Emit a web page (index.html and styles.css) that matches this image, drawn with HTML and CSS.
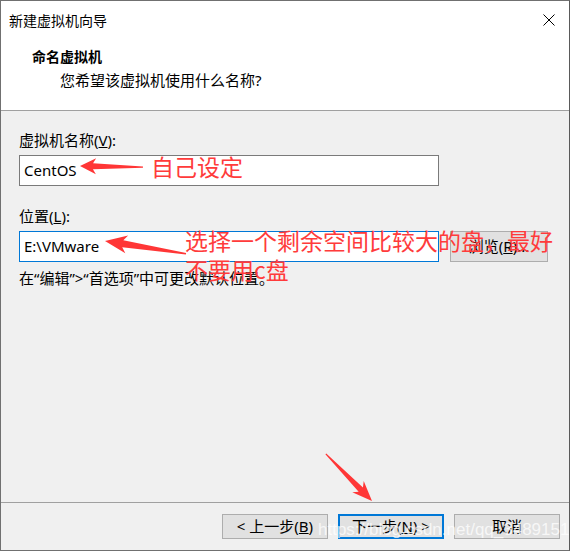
FILE: index.html
```html
<!DOCTYPE html>
<html lang="zh-CN">
<head>
<meta charset="utf-8">
<title>新建虚拟机向导</title>
<link rel="stylesheet" href="styles.css">
</head>
<body>
<div class="window">
  <div class="header">
    <div class="titlebar">
      <span class="title">新建虚拟机向导</span>
      <svg class="close" width="12" height="12" viewBox="0 0 12 12"><path d="M0.5 0.5 L11.5 11.5 M11.5 0.5 L0.5 11.5" stroke="#000" stroke-width="1" fill="none"/></svg>
    </div>
    <div class="heading">命名虚拟机</div>
    <div class="subtitle">您希望该虚拟机使用什么名称?</div>
  </div>
  <div class="content">
    <div class="label">虚拟机名称(<u>V</u>):</div>
    <div class="field">CentOS</div>
    <div class="label label2">位置(<u>L</u>):</div>
    <div class="row">
      <div class="field focused">E:\VMware</div>
      <div class="browse">浏览(<u>R</u>)...</div>
    </div>
    <div class="hint">在“编辑”&gt;“首选项”中可更改默认位置。</div>
  </div>
  <div class="footer">
    <div class="btn">&lt; 上一步(<u>B</u>)</div>
    <div class="btn default">下一步(<u>N</u>) &gt;</div>
    <div class="btn">取消</div>
  </div>

  <svg class="arrows" width="570" height="551" viewBox="0 0 570 551">
    <g fill="#ff3636">
      <polygon transform="translate(80,166) rotate(1)" points="0,0 16,-8 13,-3 63,-0.6 63,0.6 13,3 16,8"/>
      <polygon transform="translate(105,241) rotate(9)" points="0,0 22,-9 18,-3.5 82,-0.8 82,0.8 18,3.5 22,9"/>
      <polygon transform="translate(372,501) rotate(-134.4)" points="0,0 20,-8 16,-3 66,-0.6 66,0.6 16,3 20,8"/>
    </g>
  </svg>
  <div class="note note1">自己设定</div>
  <div class="note note2">选择一个剩余空间比较大的盘，最好<br>不要用c盘</div>
  <div class="watermark">https://blog.csdn.net/qq_34891511</div>
</div>
</body>
</html>
```

FILE: styles.css
```css
html, body {
  margin: 0;
  padding: 0;
  background: #f0f0f0;
}

.window {
  position: relative;
  width: 570px;
  height: 551px;
  box-sizing: border-box;
  border: 1px solid #707070;
  border-right-color: #5a5a5a;
  background: #f0f0f0;
  display: flex;
  flex-direction: column;
  font-family: "Noto Sans", "Noto Sans CJK SC", sans-serif;
  color: #000;
  overflow: hidden;
}

.header {
  height: 110px;
  flex: none;
  box-sizing: border-box;
  background: #fff;
  border-bottom: 1px solid #a0a0a0;
  padding-top: 9px;
}

.titlebar {
  display: flex;
  align-items: center;
  justify-content: space-between;
  height: 20px;
  padding-left: 8px;
  padding-right: 14px;
}

.title {
  font-size: 14px;
  line-height: 20px;
  font-family: "Noto Sans CJK SC", sans-serif;
}

.close {
  display: block;
}

.heading {
  margin-top: 16px;
  margin-left: 31px;
  font-size: 14px;
  line-height: 20px;
  font-weight: bold;
  font-family: "Noto Sans CJK SC", sans-serif;
}

.subtitle {
  margin-top: 4px;
  margin-left: 59px;
  font-size: 15px;
  line-height: 20px;
}

.content {
  flex: 1;
  padding: 19px 18px 0 18px;
}

.label {
  font-size: 15px;
  line-height: 20px;
}

.label2 {
  margin-top: 20px;
}

.field {
  margin-top: 5px;
  width: 420px;
  height: 31px;
  box-sizing: border-box;
  border: 1px solid #7a7a7a;
  background: #fff;
  padding-left: 4px;
  font-size: 15px;
  line-height: 29px;
}

.field.focused {
  border-color: #0078d7;
}

.row {
  display: flex;
  align-items: flex-end;
}

.browse {
  margin-left: 11px;
  width: 98px;
  height: 31px;
  box-sizing: border-box;
  border: 1px solid #adadad;
  background: #e1e1e1;
  font-size: 15px;
  line-height: 29px;
  text-align: center;
}

.hint {
  margin-top: 6px;
  font-size: 15px;
  line-height: 20px;
}

.footer {
  flex: none;
  height: 48px;
  box-sizing: border-box;
  border-top: 1px solid #a0a0a0;
  padding-top: 11px;
  padding-right: 9px;
  display: flex;
  justify-content: flex-end;
  align-items: flex-start;
  gap: 10px;
}

.btn {
  width: 106px;
  height: 25px;
  box-sizing: border-box;
  border: 1px solid #adadad;
  background: #e1e1e1;
  font-size: 15px;
  line-height: 23px;
  text-align: center;
}

.btn.default {
  border: 2px solid #0078d7;
  line-height: 21px;
}

.arrows {
  position: absolute;
  left: -1px;
  top: -1px;
  pointer-events: none;
}

.note {
  position: absolute;
  color: #ff3b3b;
  font-family: "Noto Sans CJK SC", sans-serif;
  font-size: 23px;
  white-space: nowrap;
}

.note1 {
  left: 150px;
  top: 150px;
  line-height: 30px;
}

.note2 {
  left: 184px;
  top: 225px;
  line-height: 29px;
}

.watermark {
  position: absolute;
  left: 317px;
  top: 518px;
  font-family: "Liberation Sans", sans-serif;
  font-size: 17px;
  line-height: 22px;
  color: rgba(255, 255, 255, 0.75);
  white-space: nowrap;
}
```
